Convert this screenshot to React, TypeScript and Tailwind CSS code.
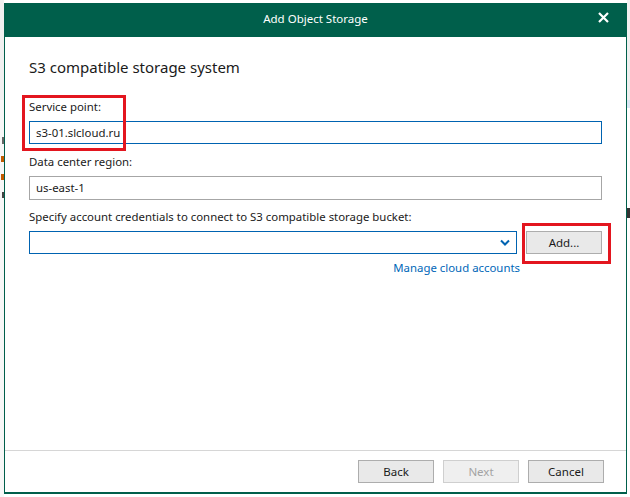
import React from "react";

const font = { fontFamily: '"Noto Sans", "Segoe UI", Arial, sans-serif' };

function CloseIcon() {
  return (
    <svg width="11" height="11" viewBox="0 0 11 11">
      <path d="M1 1 L10 10 M10 1 L1 10" stroke="white" strokeWidth="2.2" />
    </svg>
  );
}

function Chevron() {
  return (
    <svg width="10" height="7" viewBox="0 0 10 7">
      <path d="M1 1.5 L5 5.5 L9 1.5" stroke="#0063b1" strokeWidth="2" fill="none" />
    </svg>
  );
}

function Button({ label, disabled }: { label: string; disabled?: boolean }) {
  return (
    <button
      className={
        disabled
          ? "w-[76px] h-[23px] border border-[#cfcfcf] bg-[#efefef] text-[11.5px] text-[#a3a3a3] leading-none"
          : "w-[76px] h-[23px] border border-[#adadad] bg-[#e9e9e9] text-[11.5px] text-[#1a1a1a] leading-none"
      }
    >
      {label}
    </button>
  );
}

export default function App() {
  return (
    <div className="w-[630px] h-[497px] bg-white overflow-hidden flex" style={font}>
      {/* background app, left edge */}
      <div className="w-[4px] flex flex-col">
        <div className="h-[100px] bg-[#f0f0f0]" />
        <div className="flex-1 bg-[#f7f7f7] flex flex-col items-end pt-[37px] gap-[12px]">
          <div className="w-[2px] h-[7px] bg-[#666]" />
          <div className="w-[3px] h-[6px] bg-[#c25a00]" />
          <div className="w-[3px] h-[6px] bg-[#c25a00]" />
          <div className="w-[2px] h-[6px] bg-[#444]" />
        </div>
      </div>

      <div className="flex flex-col pt-[3px]">
        <div className="w-[623px] h-[491px] flex flex-col border-x border-b-2 border-[#005f4b] bg-white">
          {/* title bar */}
          <div className="h-[34px] bg-[#005f4b] flex items-center relative -mx-px">
            <div className="flex-1 text-center text-white text-[11.5px] pb-[2px]">Add Object Storage</div>
            <div className="absolute right-[18px] top-[9px]">
              <CloseIcon />
            </div>
          </div>

          <div className="flex-1 flex flex-col px-[24px] relative text-[11.4px]">
            <h1 className="mt-[20px] text-[15px] leading-[20px] text-[#1a1a1a] font-normal">
              S3 compatible storage system
            </h1>

            <label className="mt-[22px] leading-[16px] text-[#1a1a1a]">Service point:</label>
            <div className="mt-[6px] h-[23px] border border-[#0063b1] flex items-center px-[6px] text-[#1a1a1a]">
              s3-01.slcloud.ru
            </div>

            <label className="mt-[10px] leading-[16px] text-[#1a1a1a]">Data center region:</label>
            <div className="mt-[6px] h-[24px] border border-[#a6a6a6] flex items-center px-[6px] text-[#1a1a1a]">
              us-east-1
            </div>

            <label className="mt-[9px] leading-[16px] text-[#1a1a1a]">
              Specify account credentials to connect to S3 compatible storage bucket:
            </label>
            <div className="mt-[6px] flex gap-[9px]">
              <div className="flex-1 h-[23px] border border-[#0063b1] flex items-center justify-end pr-[6px]">
                <Chevron />
              </div>
              <Button label="Add..." />
            </div>
            <div className="mt-[6px] pr-[82px] flex justify-end">
              <span className="leading-[16px] text-[#0067b8]">Manage cloud accounts</span>
            </div>

            {/* annotation boxes */}
            <div className="absolute left-[17px] top-[58px] w-[104px] h-[56px] border-[3px] border-[#e3161f]" />
            <div className="absolute left-[517px] top-[186px] w-[89px] h-[41px] border-[3px] border-[#e3161f]" />

            <div className="flex-1" />
          </div>

          {/* footer */}
          <div className="h-[42px] border-t border-[#d6d6d6] flex justify-end items-start gap-[9px] pt-[9px] pr-[22px]">
            <Button label="Back" />
            <Button label="Next" disabled />
            <Button label="Cancel" />
          </div>
        </div>
      </div>

      {/* background app, right edge */}
      <div className="flex-1 flex flex-col">
        <div className="h-[100px] bg-[#f0f0f0]" />
        <div className="h-[8px] bg-[#dbe8f5]" />
        <div className="h-[100px]" />
        <div className="h-[10px] bg-[#333]" />
      </div>
    </div>
  );
}
